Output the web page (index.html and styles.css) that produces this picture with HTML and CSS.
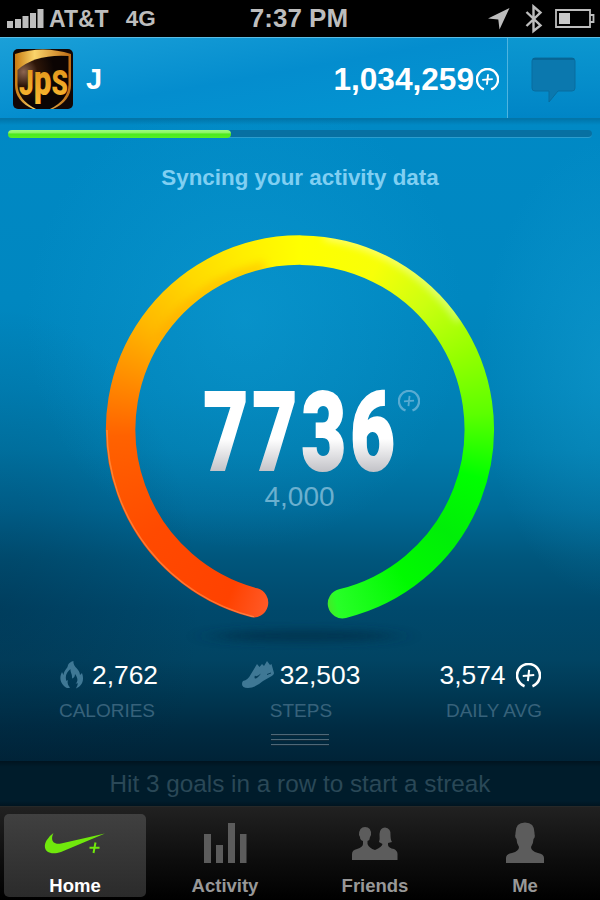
FILE: index.html
```html
<!DOCTYPE html>
<html lang="en">
  <head>
    <meta charset="UTF-8" />
    <meta name="viewport" content="width=device-width, initial-scale=1.0" />
    <title>Home</title>
    <link rel="stylesheet" href="styles.css">
  </head>

  <body>
    <!-- shared "fuel" icon -->
    <svg class="defs" width="0" height="0">
      <symbol id="fuel" viewBox="0 0 24 24">
        <path d="M8.2 22.300A11 11 0 1 1 15.800 22.300" fill="none" stroke="currentColor" stroke-width="2.500" />
        <path d="M12.6 6.500L11.4 17.500M6.500 12.400L17.500 11.600" fill="none" stroke="currentColor" stroke-width="2" />
      </symbol>
    </svg>

    <div class="status-bar">
      <div class="status-left">
        <svg class="signal" width="37" height="19" viewBox="0 0 37 19">
          <path d="M0 12h6v7H0zM8 10h6v9H8zM15.500 7h6v12h-6zM23 4h6v15h-6zM30.500 0h6v19h-6z" fill="#bdbdbd" />
        </svg>
        <span class="carrier">AT&amp;T</span>
        <span class="network">4G</span>
      </div>
      <div class="clock">7:37 PM</div>
      <div class="status-right">
        <svg width="22" height="22" viewBox="0 0 22 22">
          <path d="M21.500 0L11.500 21.500L10.300 11.500L0 10.500z" fill="#bdbdbd" />
        </svg>
        <svg class="bluetooth" width="18" height="30" viewBox="0 0 18 30">
          <path d="M1.500 8L15.500 21.500L8.500 27V2.500L15.500 8.500L1.500 22" fill="none" stroke="#bdbdbd" stroke-width="2.400" />
        </svg>
        <svg class="battery" width="40" height="20" viewBox="0 0 40 20">
          <path d="M1 1h34v17H1zM35 6h3.500v7H35" fill="none" stroke="#bdbdbd" stroke-width="1.800" />
          <path d="M4 4h11v11H4z" fill="#c8c8c8" />
        </svg>
      </div>
    </div>

    <header class="header">
      <svg class="avatar" width="60" height="60" viewBox="0 0 60 60">
        <defs>
          <linearGradient id="gold" x1="0" x2="1" y1="0" y2="0">
            <stop offset="0" stop-color="#c87a10" />
            <stop offset=".35" stop-color="#fbd56b" />
            <stop offset="1" stop-color="#bd6a12" />
          </linearGradient>
          <linearGradient id="goldText" x1="0" x2="0" y1="0" y2="1">
            <stop offset="0" stop-color="#d98a14" />
            <stop offset="1" stop-color="#fdbb33" />
          </linearGradient>
          <radialGradient id="brown" cx=".12" cy=".3" r=".6">
            <stop offset="0" stop-color="#8c6550" />
            <stop offset=".45" stop-color="#2e1608" />
            <stop offset="1" stop-color="#0b0403" />
          </radialGradient>
        </defs>
        <rect width="60" height="60" rx="5" fill="#120705" />
        <path d="M2 5Q30-4 58 5V36Q58 52 40 60H20Q2 52 2 36z" fill="url(#gold)" />
        <path d="M4.500 21Q22 5 55.500 7V36Q55 51 37 60H23Q5 51 4.500 36z" fill="url(#brown)" />
        <text x="6" y="46" textLength="49" lengthAdjust="spacingAndGlyphs" class="avatar-text" fill="url(#goldText)">J<tspan class="avatar-p">p</tspan>S</text>
      </svg>
      <span class="user-name">J</span>
      <div class="total">
        <span>1,034,259</span>
        <svg width="23" height="23"><use href="#fuel" /></svg>
      </div>
      <div class="messages">
        <svg width="46" height="48" viewBox="0 0 46 48">
          <path d="M4 1h37q3 0 3 3v27q0 3-3 3H27L18 45V34H4q-3 0-3-3V4q0-3 3-3z" fill="#0b78ae" stroke="#086d9f" stroke-width="1" />
          <path d="M2 2h41" stroke="#07628f" stroke-width="1.500" />
        </svg>
      </div>
    </header>

    <main class="main">
      <div class="progress"><div class="progress-fill"></div></div>
      <p class="sync-text">Syncing your activity data</p>

      <div class="ring">
        <svg width="400" height="420" viewBox="0 0 400 420">
          <defs>
            <mask id="ringMask" maskUnits="userSpaceOnUse" x="0" y="0" width="400" height="400">
              <path d="M153.500 372.600A179.300 179.300 0 1 1 242.500 373.600" fill="none" stroke="#fff" stroke-width="29.500" stroke-linecap="round" />
            </mask>
            <filter id="soft" x="-20%" y="-200%" width="140%" height="500%">
              <feGaussianBlur stdDeviation="14 4" />
            </filter>
            <filter id="glow" x="-20%" y="-40%" width="140%" height="180%"><feGaussianBlur stdDeviation="4" /></filter>
            <linearGradient id="digits" x1="0" x2="0" y1="0" y2="1">
              <stop offset=".55" stop-color="#fff" />
              <stop offset=".85" stop-color="#b8b8be" />
            </linearGradient>
          </defs>
          <ellipse cx="204" cy="406" rx="92" ry="6" fill="#002e47" opacity=".7" filter="url(#soft)" />
          <g mask="url(#ringMask)">
            <foreignObject x="0" y="0" width="400" height="400">
              <div class="ring-color"></div>
            </foreignObject>
            <path d="M225 6A193.500 193.500 0 0 1 360 90" fill="none" stroke="#fff" stroke-width="6" opacity=".6" filter="url(#glow)" />
            <path d="M60 110A165 165 0 0 1 165 37" fill="none" stroke="#ff9c00" stroke-width="10" opacity=".4" filter="url(#glow)" />
            <path d="M154 387A193.500 193.500 0 0 1 7 200" fill="none" stroke="#ffc080" stroke-width="1.500" opacity=".4" />
          </g>
          <text transform="scale(.7 1)" x="148 218 288 357.500" y="240" class="points" fill="url(#digits)" stroke="url(#digits)">7736</text>
          <use href="#fuel" x="298" y="160" width="22" height="22" class="points-icon" />
          <text x="199.500" y="276" class="goal">4,000</text>
        </svg>
      </div>

      <div class="stats">
        <div class="stat calories">
          <div class="stat-value">
            <svg width="24" height="28" viewBox="0 0 24 28">
              <path d="M13.500 0C12.500 6 20 8 20 14L22 12C25 20 21 26 16 27.500C17 25 18 24 17.500 22L15.500 23C19 19 17 16 15 13C15 16 13.500 17 12 17.500C12.500 13 10 11 10.500 8C7 11 4.500 15 6.500 20L8 19C7 22 8 24 10 26.500C8 28 5.500 26.500 4 25C-1 20 0 15 2 11L3.500 14C4 9 8 7 8 4C9 2 11 0.500 13.500 0z" fill="#3f7895" />
            </svg>
            <span>2,762</span>
          </div>
          <div class="stat-label">CALORIES</div>
        </div>
        <div class="stat steps">
          <div class="stat-value">
            <svg width="33" height="28" viewBox="0 0 33 28">
              <path d="M1 20Q6 19 9 13L15 3L17.500 6L20 3L22 5L25 0L28 4L29.500 3L32 12Q32 14 28 16L21 20Q13 27 6 27Q0 27 0 23Q0 21 1 20z" fill="#3f7895" />
              <path d="M13 14.500Q14 16.500 19 12.500Q15 18 13 17.500Q12 16.500 13 14.500z" fill="#063d59" />
              <path d="M25 13.500l4-1.500" stroke="#063d59" />
            </svg>
            <span>32,503</span>
          </div>
          <div class="stat-label">STEPS</div>
        </div>
        <div class="stat average">
          <div class="stat-value">
            <span>3,574</span>
            <svg width="25" height="25"><use href="#fuel" /></svg>
          </div>
          <div class="stat-label">DAILY AVG</div>
        </div>
      </div>

      <div class="handle"><i></i><i></i><i></i></div>
    </main>

    <div class="streak">Hit 3 goals in a row to start a streak</div>

    <nav class="tabs">
      <div class="tab active">
        <svg width="62" height="42" viewBox="0 0 62 42">
          <path d="M9.500 11C6.500 17 8 23 17 21.500L61 11.500L17 30C6 34 -3 29 2.500 18.500Q5 14 9.500 11z" fill="#70e80c" />
          <path d="M51.500 20.500L49.500 31M45.500 25.800H55.500" stroke="#70e80c" stroke-width="2" />
        </svg>
        <span>Home</span>
      </div>
      <div class="tab">
        <svg width="44" height="42" viewBox="0 0 44 42">
          <path d="M1 12h7v29H1zM13 23h7v18H13zM25 1h7v40H25zM37 12h6.500v29H37z" fill="#5c5c5c" />
        </svg>
        <span>Activity</span>
      </div>
      <div class="tab">
        <svg width="46" height="42" viewBox="0 0 46 42">
          <path d="M0 38V32Q0 28 5 27Q11 25 11 22V19Q8 18 8 15L7 13Q7 5 13 5Q19.500 5 19 13L18 15Q18 18 15.500 19V22Q17 26 23 28Q30 25 30.500 22L27 20Q28 17 27.500 12Q28 5.500 33 5.500Q39 6 38.500 13Q38.500 18 40 20L36 21V23Q36.500 26 42 27Q45.500 29 45.500 32V38z" fill="#5c5c5c" />
        </svg>
        <span>Friends</span>
      </div>
      <div class="tab">
        <svg width="38" height="42" viewBox="0 0 38 42">
          <path d="M0 41V36Q0 32 6 31Q13 29 13 25Q10.500 21 10.500 17Q8.500 15 9.500 12Q9 0.500 19 0.500Q29 0.500 28.500 12Q29.500 15 27.500 17Q27.500 21 25 25Q25 29 32 31Q38 32 38 36V41z" fill="#5c5c5c" />
        </svg>
        <span>Me</span>
      </div>
    </nav>
  </body>
</html>
```
FILE: styles.css
```css
* {
  box-sizing: border-box;
  margin: 0;
  padding: 0;
}

body {
  width: 600px;
  height: 900px;
  display: flex;
  flex-direction: column;
  overflow: hidden;
  font-family: "Liberation Sans", Arial, sans-serif;
  background-color: #000;
  color: #fff;
}

svg {
  display: block;
  flex: none;
}

.defs {
  position: absolute;
}

/* status bar */
.status-bar {
  flex: none;
  height: 37px;
  display: grid;
  grid-template-columns: 200px 1fr 200px;
  align-items: center;
  padding: 0 5px 0 7px;
  background-color: #000;
  color: #bdbdbd;
  font-weight: bold;
  white-space: nowrap;
}

.status-left,
.status-right {
  display: flex;
  align-items: center;
}

.status-left {
  font-size: 23px;
  padding-top: 1px;
}

.signal {
  margin: 0 5px 2px 0;
}

.network {
  margin-left: 17px;
  font-size: 22.5px;
}

.clock {
  text-align: center;
  font-size: 26px;
  padding-right: 4px;
}

.status-right {
  justify-content: flex-end;
}

.bluetooth {
  margin-left: 15px;
}

.battery {
  margin-left: 12px;
}

/* header */
.header {
  flex: none;
  height: 82px;
  display: flex;
  align-items: center;
  border-top: 1px solid #5bbce4;
  border-bottom: 1px solid #0475a8;
  background: linear-gradient(170deg, #1ba0d8 0%, #048dce 45%, #0298d3 100%);
}

.avatar {
  margin: 2px 0 0 13px;
}

.avatar-text {
  font-family: Roboto, "Liberation Sans", sans-serif;
  font-weight: 900;
  font-size: 35px;
}

.avatar-p {
  font-size: 42px;
}

.user-name {
  margin: 2px 0 0 13px;
  font-size: 29px;
  font-weight: bold;
}

.total {
  margin-left: auto;
  display: flex;
  align-items: center;
  gap: 2px;
  padding: 2px 8px 0 0;
  font-size: 31.6px;
  font-weight: bold;
}

.messages {
  width: 93px;
  height: 80px;
  display: flex;
  align-items: center;
  justify-content: center;
  padding-top: 6px;
  border-left: 1px solid #4fb4df;
  background: linear-gradient(#0c97d0, #0085c6);
}

/* main */
.main {
  flex: none;
  height: 642px;
  display: flex;
  flex-direction: column;
  align-items: center;
  background:
    linear-gradient(rgba(0, 80, 120, 0.35), transparent 6px),
    radial-gradient(ellipse 220px 230px at 245px 200px, rgba(20, 165, 220, 0.38), transparent),
    radial-gradient(ellipse 130px 230px at 610px 250px, rgba(25, 165, 215, 0.4), transparent),
    radial-gradient(ellipse 200px 300px at 0 490px, rgba(0, 35, 60, 0.3), transparent),
    linear-gradient(#0089c5 0, #0087c0 180px, #0082b8 270px, #007bad 330px, #006a98 390px, #00567c 440px, #00496c 490px, #014463 540px, #003853 575px, #002b42 610px, #002337 642px);
}

.progress {
  flex: none;
  width: 584px;
  height: 8px;
  margin-top: 11px;
  border-radius: 4px;
  background-color: #0770a2;
  border-bottom: 1px solid #2c9dcd;
}

.progress-fill {
  width: 223px;
  height: 8px;
  border-radius: 4px;
  background: linear-gradient(#9dfb83 0, #8cf563 35%, #4cea1d 50%, #55f025 100%);
}

.sync-text {
  margin-top: 27px;
  line-height: 26px;
  font-size: 22.4px;
  font-weight: bold;
  color: #80cff2;
}

.ring {
  flex: none;
  height: 420px;
  margin-top: 39px;
}

.ring-color {
  width: 400px;
  height: 399px;
  background: conic-gradient(#ffff00 0deg, #f8ff08 25deg, #ccff10 45deg, #96ff00 65deg, #5cff00 85deg, #00ff00 105deg, #00ee08 125deg, #00fa00 145deg, #28ff28 168deg, #ff5a28 190deg, #ff4200 203deg, #ff4a00 235deg, #ff6200 268deg, #ff8a00 285deg, #ffb900 305deg, #ffda00 325deg, #ffee00 342deg, #ffff00 360deg);
}

.points {
  font-family: Roboto, "Liberation Sans", sans-serif;
  font-weight: 900;
  font-size: 110px;
  stroke-width: 2px;
}

.points-icon {
  color: #58abd2;
}

.goal {
  font-size: 28px;
  text-anchor: middle;
  fill: #6bb0cf;
}

/* stats */
.stats {
  flex: none;
  width: 600px;
  display: grid;
  grid-template-columns: 200px 200px 200px;
  margin-top: 9px;
}

.stat {
  display: flex;
  flex-direction: column;
  align-items: center;
}

.calories {
  padding-left: 18px;
}

.steps {
  padding-left: 2px;
}

.average {
  padding-right: 20px;
}

.stat-value {
  display: flex;
  align-items: center;
  height: 32px;
  gap: 5px;
  font-size: 26.4px;
}

.calories .stat-value {
  gap: 8px;
}

.average .stat-value {
  gap: 10px;
}

.stat-label {
  margin-top: 9px;
  line-height: 22px;
  font-size: 19px;
  color: #37627b;
}

.calories .stat-label {
  padding-right: 4px;
}

.average .stat-label {
  padding-left: 8px;
}

.handle {
  flex: none;
  width: 58px;
  margin-top: 12px;
  display: flex;
  flex-direction: column;
  gap: 3px;
}

.handle i {
  height: 2px;
  background-color: #4d6878;
  border-bottom: 1px solid #102a3a;
}

.streak {
  flex: none;
  height: 45px;
  line-height: 45px;
  text-align: center;
  font-size: 24.3px;
  color: #2a4857;
  background: linear-gradient(#00131f, #001c2b 6px, #001c2b 40px, #001420);
}

/* tab bar */
.tabs {
  flex: none;
  height: 94px;
  display: grid;
  grid-template-columns: repeat(4, 150px);
  border-top: 1px solid #252828;
  background: linear-gradient(#212121, #0c0c0c 60%, #000);
}

.tab {
  display: flex;
  flex-direction: column;
  align-items: center;
  margin: 7px 4px 4px;
  padding-top: 8px;
  border-radius: 5px;
  font-size: 18.5px;
  font-weight: bold;
  color: #989898;
}

.tab span {
  margin-top: 11px;
  line-height: 22px;
}

.tab.active {
  background: linear-gradient(#404040, #2b2b2b);
  color: #fff;
}
```
